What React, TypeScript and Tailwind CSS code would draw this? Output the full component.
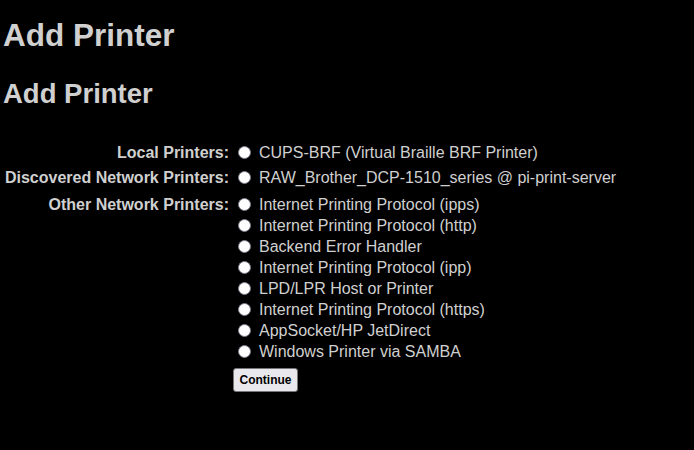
const font = { fontFamily: '"Liberation Sans", Arial, sans-serif' }

const groups: { label: string; options: string[] }[] = [
  { label: 'Local Printers:', options: ['CUPS-BRF (Virtual Braille BRF Printer)'] },
  { label: 'Discovered Network Printers:', options: ['RAW_Brother_DCP-1510_series @ pi-print-server'] },
  {
    label: 'Other Network Printers:',
    options: [
      'Internet Printing Protocol (ipps)',
      'Internet Printing Protocol (http)',
      'Backend Error Handler',
      'Internet Printing Protocol (ipp)',
      'LPD/LPR Host or Printer',
      'Internet Printing Protocol (https)',
      'AppSocket/HP JetDirect',
      'Windows Printer via SAMBA',
    ],
  },
]

export default function App() {
  return (
    <div className="min-h-[450px] w-full bg-black pl-[3px] text-[#d0d0d0]" style={font}>
      <h1 className="pt-[17px] text-[31.5px] font-bold leading-[37px]">Add Printer</h1>
      <h2 className="mt-[24px] text-[27.5px] font-bold leading-[32px]">Add Printer</h2>

      <form className="mt-[32px] grid grid-cols-[227px_auto] gap-x-[3px]">
        {groups.map((g, gi) => (
          <div key={g.label} className="contents">
            <div
              className={`flex h-[21px] items-center justify-end pr-[1px] text-[16px] font-bold ${
                gi === 1 ? 'mt-[4px]' : gi === 2 ? 'mt-[6px]' : ''
              }`}
            >
              {g.label}
            </div>
            <div className={`flex flex-col ${gi === 1 ? 'mt-[4px]' : gi === 2 ? 'mt-[6px]' : ''}`}>
              {g.options.map(o => (
                <label key={o} className="flex h-[21px] items-center text-[16px]">
                  <input
                    type="radio"
                    name="device"
                    className="ml-[5px] mr-[8px] h-[13px] w-[13px] shrink-0 appearance-none rounded-full border-[1.5px] border-[#7d7787] bg-white"
                  />
                  <span>{o}</span>
                </label>
              ))}
            </div>
          </div>
        ))}
        <div />
        <div className="mt-[5px]">
          <button
            type="button"
            className="h-[24px] w-[65px] rounded-[3px] border border-[#767676] bg-[#e9e9ed] text-[12px] font-bold text-black"
          >
            Continue
          </button>
        </div>
      </form>
    </div>
  )
}
